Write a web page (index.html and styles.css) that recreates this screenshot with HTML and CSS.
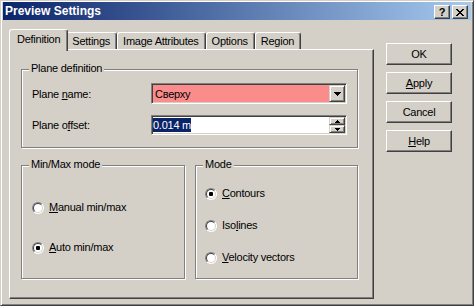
FILE: index.html
```html
<!DOCTYPE html>
<html lang="en">
<head>
  <meta charset="UTF-8">
  <title>Preview Settings</title>
  <link rel="stylesheet" href="styles.css">
</head>
<body>
  <div class="window">
    <div class="titlebar">
      <span class="title">Preview Settings</span>
      <span class="tbtn">?</span>
      <span class="tbtn close">
        <svg width="8" height="7" viewBox="0 0 8 7" shape-rendering="crispEdges"><path d="M0 0h2v1H0z M6 0h2v1H6z M1 1h2v1H1z M5 1h2v1H5z M2 2h4v1H2z M3 3h2v1H3z M2 4h4v1H2z M1 5h2v1H1z M5 5h2v1H5z M0 6h2v1H0z M6 6h2v1H6z"/></svg>
      </span>
    </div>
    <div class="client">
      <div class="tabctl">
        <div class="tabs">
          <div class="tab active">Definition</div>
          <div class="tab">Settings</div>
          <div class="tab">Image Attributes</div>
          <div class="tab">Options</div>
          <div class="tab">Region</div>
        </div>
        <div class="panel">
          <!-- plane definition -->
          <div class="group plane">
            <span class="legend">Plane definition</span>
            <div class="field">
              <span class="label">Plane <u>n</u>ame:</span>
              <div class="combo">
                <span class="value">Сверху</span>
                <span class="drop">
                  <svg width="7" height="4" viewBox="0 0 7 4" shape-rendering="crispEdges"><path d="M0 0h7v1H0z M1 1h5v1H1z M2 2h3v1H2z M3 3h1v1H3z"/></svg>
                </span>
              </div>
            </div>
            <div class="field second">
              <span class="label">Plane o<u>f</u>fset:</span>
              <div class="edit">
                <span class="value"><span class="sel">0.014 m</span></span>
                <span class="spin">
                  <span class="sbtn"><svg width="5" height="3" viewBox="0 0 5 3" shape-rendering="crispEdges"><path d="M2 0h1v1H2z M1 1h3v1H1z M0 2h5v1H0z"/></svg></span>
                  <span class="sbtn"><svg width="5" height="3" viewBox="0 0 5 3" shape-rendering="crispEdges"><path d="M0 0h5v1H0z M1 1h3v1H1z M2 2h1v1H2z"/></svg></span>
                </span>
              </div>
            </div>
          </div>

          <div class="lower">
            <div class="group minmax">
              <span class="legend">Min/Max mode</span>
              <div class="option"><span class="radio"></span><span><u>M</u>anual min/max</span></div>
              <div class="option"><span class="radio checked"></span><span><u>A</u>uto min/max</span></div>
            </div>
            <div class="group mode">
              <span class="legend">Mode</span>
              <div class="option"><span class="radio checked"></span><span><u>C</u>ontours</span></div>
              <div class="option"><span class="radio"></span><span>Iso<u>l</u>ines</span></div>
              <div class="option"><span class="radio"></span><span><u>V</u>elocity vectors</span></div>
            </div>
          </div>
        </div>
      </div>

      <div class="actions">
        <div class="btn">OK</div>
        <div class="btn"><u>A</u>pply</div>
        <div class="btn">Cancel</div>
        <div class="btn"><u>H</u>elp</div>
      </div>
    </div>
  </div>
</body>
</html>
```

FILE: styles.css
```css
* {
  margin: 0;
  padding: 0;
  box-sizing: border-box;
}
body {
  font: 11px "Liberation Sans", Arial, sans-serif;
  letter-spacing: -0.25px;
  color: #000;
  background: #d4d0c8;
}
.window {
  width: 474px;
  height: 306px;
  background: #d4d0c8;
  border: 1px solid;
  border-color: #d4d0c8 #404040 #404040 #d4d0c8;
  box-shadow: inset 1px 1px #fff, inset -1px -1px #808080;
  padding: 1px 2px 2px 2px;
}

/* title bar */
.titlebar {
  height: 18px;
  display: flex;
  align-items: center;
  padding: 0 3px 0 2px;
  background: linear-gradient(to right, #0a246a, #a6caf0);
  color: #fff;
}
.title {
  flex: 1;
  font-weight: bold;
  font-size: 12px;
  letter-spacing: 0;
}
.tbtn {
  width: 16px;
  height: 14px;
  margin-top: 2px;
  display: flex;
  align-items: center;
  justify-content: center;
  background: #d4d0c8;
  border: 1px solid;
  border-color: #fff #404040 #404040 #fff;
  box-shadow: inset -1px -1px #808080;
  color: #000;
  font-weight: bold;
  font-size: 11px;
  letter-spacing: 0;
}
.tbtn.close {
  margin-left: 2px;
}

.client {
  display: flex;
  align-items: flex-start;
  padding: 9px 0 0 6px;
}

/* tab control */
.tabctl {
  width: 365px;
}
.tabs {
  display: flex;
  align-items: flex-end;
  height: 20px;
  padding-left: 2px;
}
.tab {
  height: 17px;
  padding: 2px 6px 0 5px;
  border: 1px solid;
  border-bottom: 0;
  border-color: #fff #404040 transparent #fff;
  box-shadow: inset -1px 0 #808080;
  border-radius: 3px 3px 0 0;
  line-height: 13px;
  white-space: nowrap;
}
.tab.active {
  height: 22px;
  margin: 0 -2px -2px;
  padding: 3px 7px 0 7px;
  background: #d4d0c8;
  position: relative;
  z-index: 1;
}
.panel {
  height: 250px;
  border: 1px solid;
  border-color: #fff #404040 #404040 #fff;
  box-shadow: inset -1px -1px #808080;
  padding: 19px 0 0 11px;
}

/* group boxes */
.group {
  position: relative;
  border: 1px solid #808080;
  box-shadow: inset 1px 1px #fff, 1px 1px #fff;
}
.legend {
  position: absolute;
  top: -8px;
  left: 7px;
  padding: 0 2px;
  background: #d4d0c8;
  line-height: 13px;
  white-space: nowrap;
}
.plane {
  width: 337px;
  height: 79px;
  padding: 13px 10px 0;
}
.field {
  display: flex;
  align-items: center;
  height: 21px;
}
.field.second {
  height: 20px;
  margin-top: 11px;
}
.label {
  width: 119px;
}

.combo,
.edit {
  width: 196px;
  height: 21px;
  display: flex;
  padding: 1px;
  border: 1px solid;
  border-color: #808080 #fff #fff #808080;
  box-shadow: inset 1px 1px #404040, inset -1px -1px #d4d0c8;
}
.combo {
  background: #fa8c8c;
}
.edit {
  height: 20px;
  background: #fff;
}
.value {
  flex: 1;
  display: flex;
  align-items: center;
}
.combo .value {
  padding-left: 2px;
}
.sel {
  background: #0a246a;
  color: #fff;
  line-height: 14px;
}
.drop,
.sbtn {
  width: 16px;
  height: 17px;
  display: flex;
  align-items: center;
  justify-content: center;
  background: #d4d0c8;
  border: 1px solid;
  border-color: #d4d0c8 #404040 #404040 #d4d0c8;
  box-shadow: inset 1px 1px #fff, inset -1px -1px #808080;
}
.spin {
  display: flex;
  flex-direction: column;
}
.sbtn {
  height: 8px;
}

/* radio groups */
.lower {
  display: grid;
  grid-template-columns: 164px 163px;
  column-gap: 10px;
  margin-top: 17px;
}
.lower .group {
  height: 114px;
  display: flex;
  flex-direction: column;
}
.minmax {
  padding: 35px 0 0 10px;
  gap: 27px;
}
.mode {
  padding: 21px 0 0 9px;
  gap: 19px;
}
.option {
  display: flex;
  align-items: center;
  gap: 5px;
  height: 13px;
  line-height: 13px;
}
.radio {
  position: relative;
  width: 12px;
  height: 12px;
  border-radius: 50%;
  background: #fff;
  border: 1px solid;
  border-color: #808080 #fff #fff #808080;
}
.radio::before {
  content: "";
  position: absolute;
  inset: 0;
  border-radius: 50%;
  border: 1px solid;
  border-color: #404040 #d4d0c8 #d4d0c8 #404040;
}
.radio.checked::after {
  content: "";
  position: absolute;
  left: 3px;
  top: 3px;
  width: 4px;
  height: 4px;
  border-radius: 1px;
  background: #000;
}

/* dialog buttons */
.actions {
  display: flex;
  flex-direction: column;
  gap: 7px;
  margin: 14px 0 0 12px;
}
.btn {
  width: 66px;
  height: 22px;
  text-align: center;
  line-height: 20px;
  border: 1px solid;
  border-color: #fff #404040 #404040 #fff;
  box-shadow: inset -1px -1px #808080;
}
```
